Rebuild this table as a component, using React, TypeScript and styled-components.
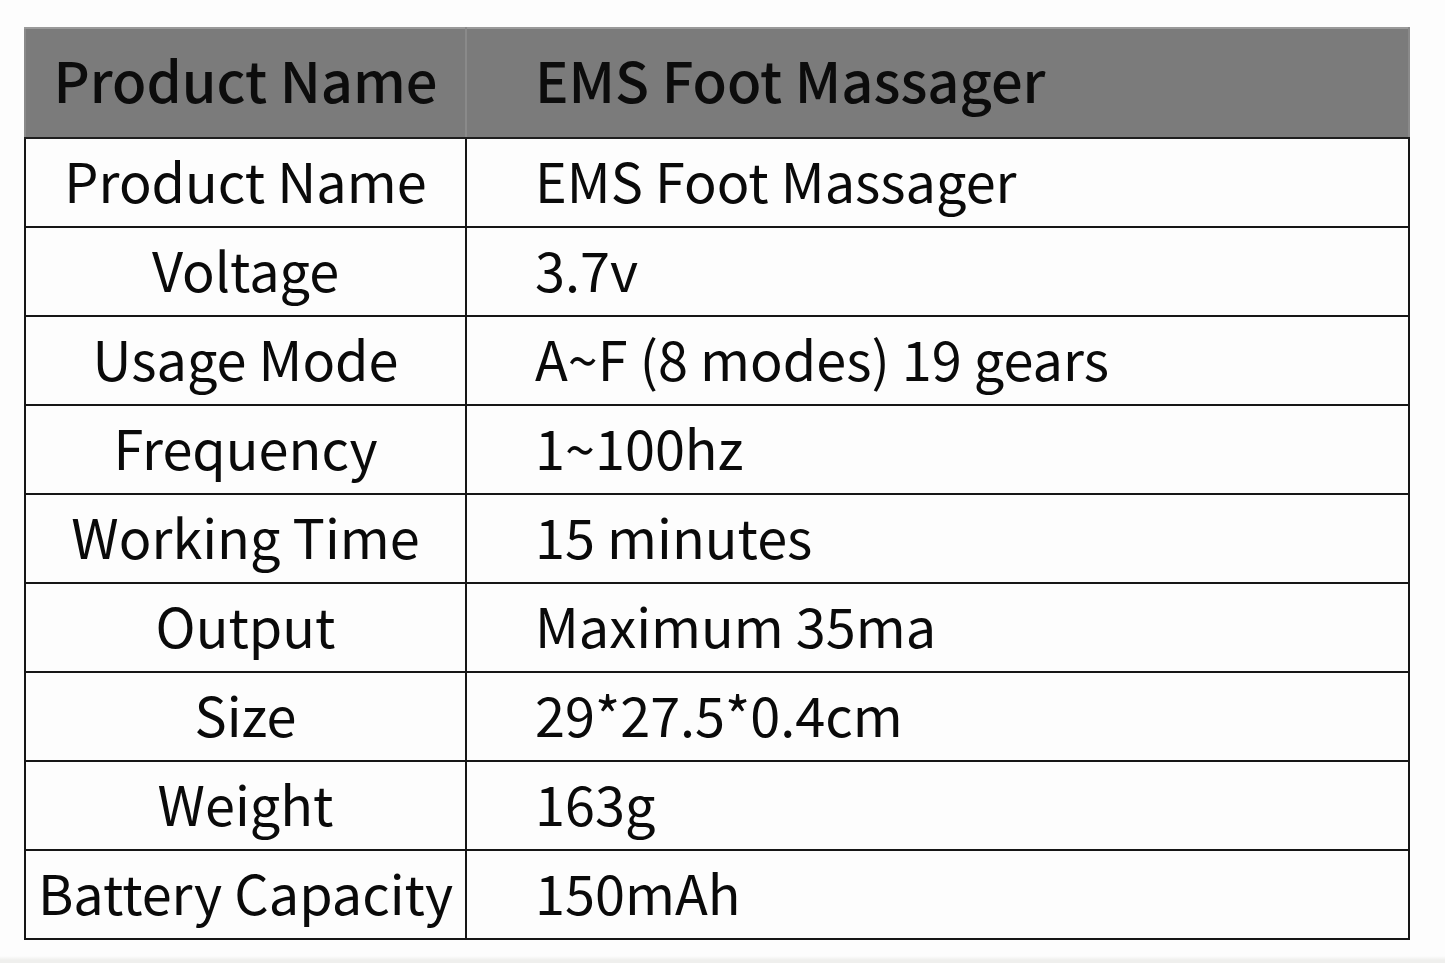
import React from "react";
import styled, { createGlobalStyle } from "styled-components";

type Spec = {
  label: string;
  value: string;
};

const specs: Spec[] = [
  { label: "Product Name", value: "EMS Foot Massager" },
  { label: "Voltage", value: "3.7v" },
  { label: "Usage Mode", value: "A~F (8 modes) 19 gears" },
  { label: "Frequency", value: "1~100hz" },
  { label: "Working Time", value: "15 minutes" },
  { label: "Output", value: "Maximum 35ma" },
  { label: "Size", value: "29*27.5*0.4cm" },
  { label: "Weight", value: "163g" },
  { label: "Battery Capacity", value: "150mAh" },
];

const GlobalStyle = createGlobalStyle`
  html, body {
    margin: 0;
    padding: 0;
    background: #fdfdfd;
  }
  body {
    font-family: "Noto Sans CJK SC", "Noto Sans", sans-serif;
    color: #0a0a0a;
  }
`;

const Page = styled.div`
  width: 1445px;
  height: 963px;
  box-sizing: border-box;
  padding: 27px 0 0 24px;
  background: linear-gradient(to bottom, #fdfdfd 0, #fdfdfd 956px, #efefed 960px);
`;

const Table = styled.table`
  width: 1386px;
  border-collapse: collapse;
  table-layout: fixed;
`;

const HeadCell = styled.th<{ $align: "center" | "left" }>`
  height: 110px;
  box-sizing: border-box;
  padding: 0 0 8px ${({ $align }) => ($align === "left" ? "68px" : "0")};
  background: #7b7b7b;
  border: 2px solid #1e1e1e;
  border-top-color: #9a9a9a;
  border-left-color: #8a8a8a;
  border-right-color: #8a8a8a;
  font-size: 56px;
  font-weight: 500;
  text-align: ${({ $align }) => $align};
  color: #0c0c0c;
  white-space: nowrap;
  line-height: 1;
`;

const Cell = styled.td<{ $align: "center" | "left" }>`
  height: 89px;
  box-sizing: border-box;
  padding: 0 0 6px ${({ $align }) => ($align === "left" ? "68px" : "0")};
  border: 2px solid #161616;
  font-size: 54px;
  font-weight: 400;
  text-align: ${({ $align }) => $align};
  white-space: nowrap;
  line-height: 1;
`;

const LabelCol = styled.col`
  width: 441px;
`;

export default function App() {
  return (
    <>
      <GlobalStyle />
      <Page>
        <Table>
          <colgroup>
            <LabelCol />
            <col />
          </colgroup>
          <thead>
            <tr>
              <HeadCell $align="center">Product Name</HeadCell>
              <HeadCell $align="left">EMS Foot Massager</HeadCell>
            </tr>
          </thead>
          <tbody>
            {specs.map((s) => (
              <tr key={s.label}>
                <Cell $align="center">{s.label}</Cell>
                <Cell $align="left">{s.value}</Cell>
              </tr>
            ))}
          </tbody>
        </Table>
      </Page>
    </>
  );
}
